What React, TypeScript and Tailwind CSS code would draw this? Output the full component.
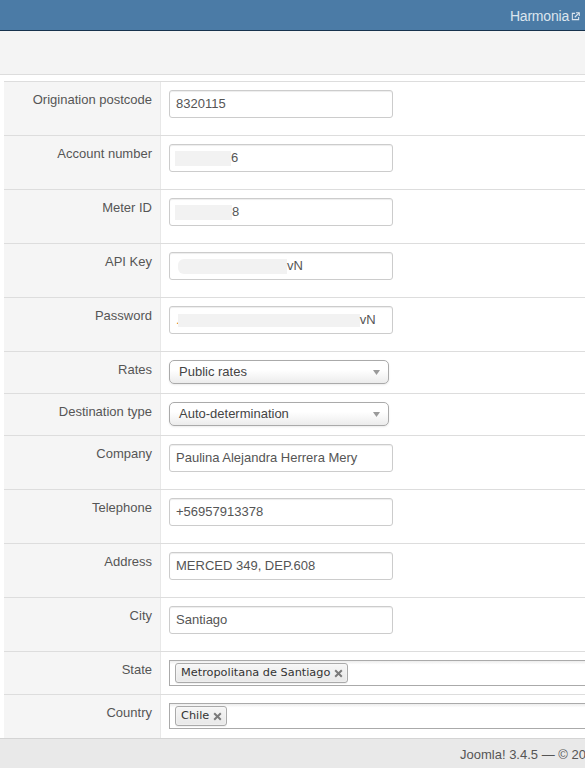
import React from "react";

type Row =
  | { kind: "text"; label: string; value: React.ReactNode }
  | { kind: "select"; label: string; value: string }
  | { kind: "tags"; label: string; tags: string[]; last?: boolean };

const Mask = ({ w, h = 15, className = "" }: { w: number; h?: number; className?: string }) => (
  <span
    className={`inline-block bg-[#f2f2f2] align-middle ${className}`}
    style={{ width: w, height: h }}
  />
);

const rows: Row[] = [
  { kind: "text", label: "Origination postcode", value: "8320115" },
  {
    kind: "text",
    label: "Account number",
    value: (
      <>
        <Mask w={56} className="-ml-[1px]" />
        <span>6</span>
      </>
    ),
  },
  {
    kind: "text",
    label: "Meter ID",
    value: (
      <>
        <Mask w={57} className="-ml-[1px]" />
        <span>8</span>
      </>
    ),
  },
  {
    kind: "text",
    label: "API Key",
    value: (
      <>
        <Mask w={109} className="ml-[2px] rounded-l-[6px]" />
        <span>vN</span>
      </>
    ),
  },
  {
    kind: "text",
    label: "Password",
    value: (
      <>
        <span className="text-[#d9822b]">.</span>
        <Mask w={182} h={13} className="-ml-[2px]" />
        <span>vN</span>
      </>
    ),
  },
  { kind: "select", label: "Rates", value: "Public rates" },
  { kind: "select", label: "Destination type", value: "Auto-determination" },
  { kind: "text", label: "Company", value: "Paulina Alejandra Herrera Mery" },
  { kind: "text", label: "Telephone", value: "+56957913378" },
  { kind: "text", label: "Address", value: "MERCED 349, DEP.608" },
  { kind: "text", label: "City", value: "Santiago" },
  { kind: "tags", label: "State", tags: ["Metropolitana de Santiago"] },
  { kind: "tags", label: "Country", tags: ["Chile"], last: true },
];

const ExternalIcon = () => (
  <svg width="9" height="9" viewBox="0 0 10 10" fill="none" className="ml-[2px]">
    <path d="M4.5 1.5H1.5V8.5H8.5V5.5" stroke="currentColor" strokeWidth="1.2" />
    <path d="M5.5 0.8H9.2V4.5" stroke="currentColor" strokeWidth="1.2" />
    <path d="M9 1L4.2 5.8" stroke="currentColor" strokeWidth="1.3" />
  </svg>
);

const Caret = () => (
  <svg width="7" height="5" viewBox="0 0 7 5" className="text-[#9a9a9a]">
    <path d="M0 0H7L3.5 5Z" fill="currentColor" />
  </svg>
);

const CloseX = () => (
  <svg width="9" height="9" viewBox="0 0 9 9" className="text-[#7a7a7a]">
    <path d="M1.2 1.2L7.8 7.8M7.8 1.2L1.2 7.8" stroke="currentColor" strokeWidth="2" />
  </svg>
);

function Field({ row }: { row: Row }) {
  if (row.kind === "text") {
    return (
      <div className="flex h-[28px] w-[224px] items-center rounded-[3px] border border-[#cccccc] bg-white px-[6px] text-[13px] leading-[18px] text-[#555555] shadow-[inset_0_1px_1px_rgba(0,0,0,0.075)]">
        {row.value}
      </div>
    );
  }
  if (row.kind === "select") {
    return (
      <div className="flex h-[24px] w-[220px] items-center justify-between rounded-[5px] border border-[#aaaaaa] bg-gradient-to-b from-white from-40% to-[#ececec] pl-[9px] pr-[8px] text-[13px] leading-[22px] text-[#444444] shadow-[0_1px_2px_rgba(0,0,0,0.08)]">
        <span>{row.value}</span>
        <Caret />
      </div>
    );
  }
  return (
    <div className="flex h-[26px] w-[440px] shrink-0 items-center border border-[#aaaaaa] bg-gradient-to-b from-[#eeeeee] from-[1%] to-white to-[15%] pl-[5px]">
      {row.tags.map((t) => (
        <span
          key={t}
          className="flex h-[20px] items-center rounded-[3px] border border-[#aaaaaa] bg-gradient-to-b from-[#f6f6f6] to-[#e8e8e8] pl-[5px] pr-[4px] font-['DejaVu_Sans',Verdana,sans-serif] text-[11.3px] text-[#333333] shadow-[inset_0_0_2px_white,0_1px_0_rgba(0,0,0,0.05)]"
        >
          {t}
          <span className="ml-[4px] flex items-center">
            <CloseX />
          </span>
        </span>
      ))}
    </div>
  );
}

export default function App() {
  return (
    <div className="flex h-[768px] w-[585px] flex-col overflow-hidden bg-white font-['Liberation_Sans',Arial,sans-serif]">
      {/* top navbar */}
      <header className="flex h-[31px] shrink-0 items-center justify-end border-b border-[#17324d] bg-[#4b7ba6] pr-[5px] pt-[2px] text-[14px] tracking-[-0.2px] text-[#dce5ee]">
        <span>Harmonia</span>
        <ExternalIcon />
      </header>

      {/* toolbar strip */}
      <div className="h-[44px] shrink-0 border-b border-[#dddddd] bg-[#f4f4f4]" />

      {/* settings table */}
      <div className="mt-[6px] flex flex-col overflow-hidden pl-[4px]">
        {rows.map((row) => {
          const h = row.kind === "text" ? "h-[54px]" : row.kind === "select" ? "h-[42px]" : row.last ? "h-[44px]" : "h-[43px]";
          return (
            <div key={row.label} className={`flex shrink-0 border-t border-[#dddddd] ${h}`}>
              <div className="w-[156px] shrink-0 bg-[#f5f5f5] pr-[8px] pt-[9px] text-right text-[13px] leading-[18px] text-[#555555]">
                {row.label}
              </div>
              <div className="flex flex-1 border-l border-[#e8e8e8] pl-[8px] pt-[8px]">
                <Field row={row} />
              </div>
            </div>
          );
        })}
      </div>

      {/* footer */}
      <footer className="flex flex-1 items-center overflow-hidden whitespace-nowrap border-t border-[#d4d4d4] bg-[#e9e9e9] pl-[460px] pt-[3px] text-[13px] text-[#555555]">
        Joomla! 3.4.5 — © 2015
      </footer>
    </div>
  );
}
